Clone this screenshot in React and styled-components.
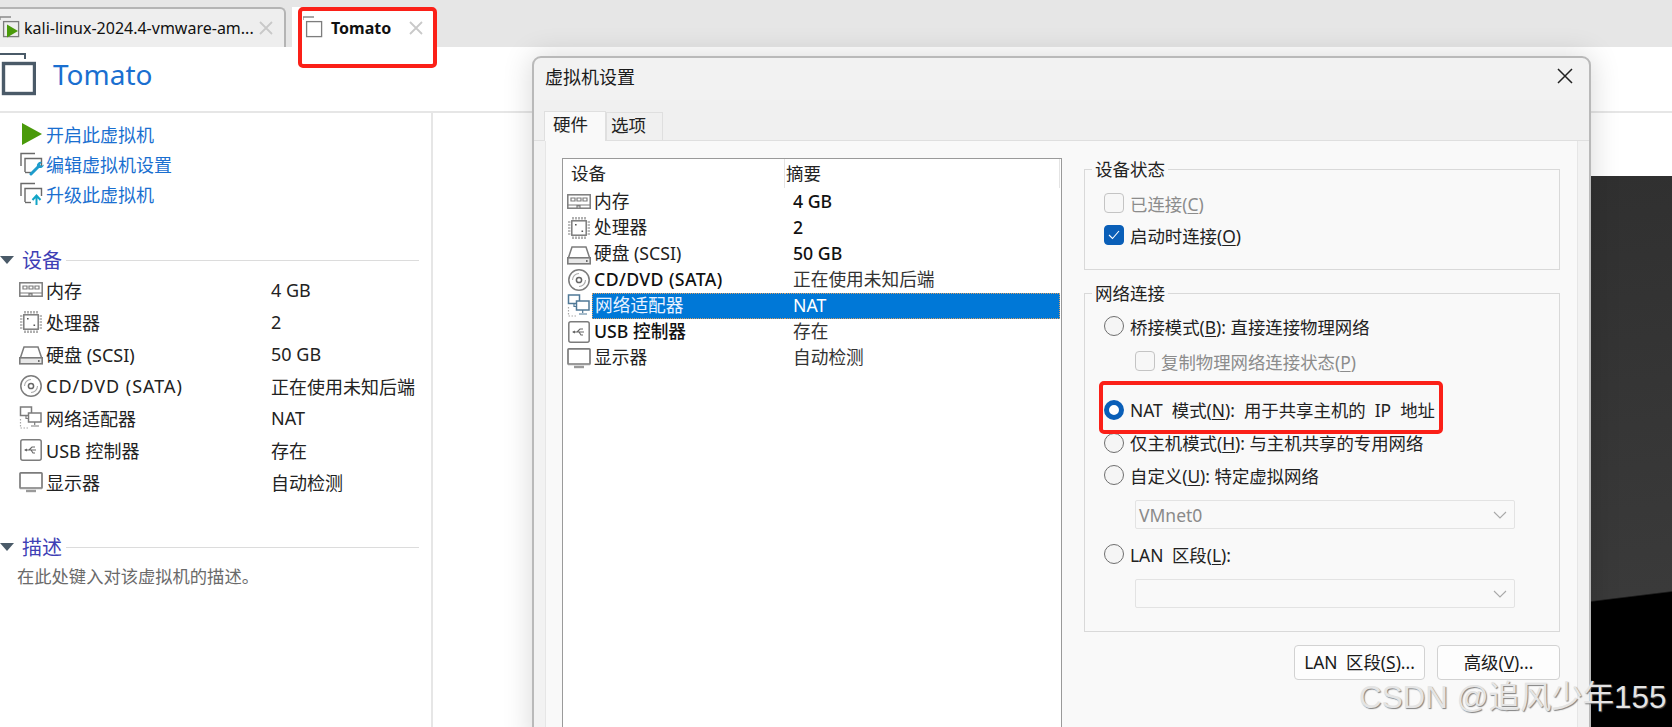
import React from 'react';
import styled, { createGlobalStyle } from 'styled-components';

const Global = createGlobalStyle`
  html, body { margin: 0; padding: 0; background: #fff; }
  body { font-family: "Noto Sans", "Noto Sans CJK SC", sans-serif; color: #1a1a1a; }
  #root { width: 1672px; height: 727px; overflow: hidden; }
  * { box-sizing: border-box; }
`;

const Page = styled.div`
  position: relative; width: 1672px; height: 727px; overflow: hidden;
  display: flex; flex-direction: column; background: #fff;
`;
const TabBar = styled.div`
  height: 47px; background: #e6e6e6; display: flex; align-items: flex-end; gap: 6px; flex: none;
`;
const Tab = styled.div`
  height: 40px; display: flex; align-items: flex-start; padding-top: 9px; flex: none;
  width: ${p => p.$w}px;
  background: ${p => (p.$active ? '#fff' : '#eeeeee')};
  border-radius: 0 6px 0 0;
  ${p => (p.$active ? 'padding-left: 11px;' : 'border-top: 2px solid #b4b4b4; border-right: 2px solid #b4b4b4; padding-top: 7px;')}
`;
const TabLabel = styled.span`
  font-size: 16px;
  font-weight: ${p => (p.$active ? 700 : 400)};
  line-height: 24px; color: #111; white-space: nowrap; margin-left: ${p => (p.$active ? '8px' : '4px')};
`;
const TabClose = styled.svg`
  width: 14px; height: 14px; margin-top: 5px; margin-left: auto; margin-right: ${p => p.$mr}px; flex: none;
`;
const Header = styled.div`
  height: 66px; flex: none; border-bottom: 2px solid #e6e6e6; display: flex; align-items: center; gap: 17px;
  padding-bottom: 10px;
`;
const Title = styled.h1`
  margin: 0; font-size: 28px; font-weight: 400; color: #1a6fd0; line-height: 36px;
`;
const Body = styled.div`
  flex: 1; display: flex; min-height: 0;
`;
const Sidebar = styled.aside`
  width: 433px; flex: none; border-right: 2px solid #e6e6e6; padding-top: 6px;
`;
const Action = styled.div`
  height: 30px; display: flex; align-items: center; padding-left: 20px; gap: 2px;
  font-size: 18px; color: #1a6fd0;
`;
const Section = styled.div`
  height: 30px; margin-top: ${p => p.$mt}px; display: flex; align-items: center; padding-right: 12px;
`;
const SectionArrow = styled.i`
  width: 0; height: 0; border-left: 7px solid transparent; border-right: 7px solid transparent;
  border-top: 8px solid #4a5a68; flex: none; margin-top: 2px;
`;
const SectionTitle = styled.span`
  font-size: 20px; color: #3f3fb5; margin-left: 8px; line-height: 30px; padding-top: 4px;
`;
const SectionLine = styled.i`
  flex: 1; height: 1px; background: #dcdcdc; margin: 2px 0 0 4px;
`;
const InfoRow = styled.div`
  height: 32px; display: grid; grid-template-columns: 252px 1fr; align-items: center; padding-left: 19px;
  font-size: 18px; color: #222;
`;
const InfoName = styled.div`
  display: flex; align-items: center; gap: 3px; white-space: nowrap;
`;
const Spread = styled.span`
  letter-spacing: ${p => (p.$on ? p.$ls : 0)}px;
`;
const Desc = styled.div`
  height: 32px; line-height: 32px; padding-left: 17px; font-size: 17.3px; color: #6a6a6a; white-space: nowrap;
`;
const Main = styled.main`
  flex: 1; display: flex; justify-content: flex-end; padding-top: 63px;
`;
const Preview = styled.div`
  width: 82px;
  background: linear-gradient(173deg, #303030 0%, #3a3a3a 75.7%, #000 76%);
`;
const Dialog = styled.section`
  position: absolute; left: 532px; top: 56px; width: 1059px; height: 690px;
  background: #f2f2f2; border: 2px solid #b9b9b9; border-radius: 9px 9px 0 0;
  box-shadow: 0 0 30px rgba(0,0,0,.16); display: flex; flex-direction: column;
`;
const DialogTitle = styled.div`
  height: 42px; flex: none; display: flex; align-items: center; justify-content: space-between;
  padding: 0 16px 6px 11px; font-size: 18px; color: #1a1a1a;
`;
const DialogTabs = styled.div`
  height: 41px; flex: none; background: #f0f0f0; display: flex; align-items: flex-end; padding-left: 10px;
  border-bottom: 1px solid #dfdfdf;
`;
const DialogTab = styled.div`
  width: ${p => p.$w}px; height: ${p => (p.$active ? 30 : 28)}px;
  background: ${p => (p.$active ? '#f9f9f9' : '#f0f0f0')};
  border: 1px solid #dfdfdf; border-bottom: none;
  margin-bottom: ${p => (p.$active ? '-1px' : '0')};
  font-size: 17.5px; line-height: 25px; padding-left: ${p => p.$pl}px; color: #222;
`;
const Pane = styled.div`
  flex: 1; margin: 0 11px; background: #f9f9f9; border-right: 1px solid #e6e6e6; border-left: 1px solid #e6e6e6;
  display: flex; padding: 17px 16px 0 16px; gap: 22px; min-height: 0;
`;
const List = styled.div`
  width: 500px; flex: none; background: #fff; border: 1px solid #9a9a9a; border-bottom: none;
`;
const ListHead = styled.div`
  height: 30px; display: grid; grid-template-columns: 222px 1fr; font-size: 17.5px; color: #222;
  padding-right: 1px;
`;
const HeadCell = styled.div`
  padding-left: ${p => p.$pl}px; line-height: 29px;
  border-right: 1px solid #e4e4e4; height: 29px;
`;
const ListRow = styled.div`
  height: 26px; display: grid; grid-template-columns: 25px 193px 1fr; align-items: center;
  font-size: 17.7px; padding-left: 4px; padding-right: 1px;
`;
const RowLabel = styled.div`
  height: 26px; line-height: 25px; padding-left: 2px; white-space: nowrap;
  ${p => (p.$sel ? 'background: #0078d7; color: #e8f2ff; border: 1px dotted #d9a066; border-right: none; line-height: 23px;' : 'color: #222;')}
  ${p => (p.$strong ? 'font-weight: 500; color: #111;' : '')}
`;
const RowValue = styled.div`
  height: 26px; line-height: 25px; padding-left: 8px; white-space: nowrap;
  ${p => (p.$sel ? 'background: #0078d7; color: #fff; border: 1px dotted #d9a066; border-left: none; line-height: 23px;' : 'color: #333;')}
  ${p => (p.$strong ? 'font-weight: 500; color: #111;' : '')}
`;
const Right = styled.div`
  width: 476px; flex: none; display: flex; flex-direction: column;
`;
const Group = styled.fieldset`
  margin: ${p => p.$mt}px 0 0; padding: ${p => p.$pt}px 0 0 19px; height: ${p => p.$h}px; width: 476px;
  border: 1px solid #d9d9d9; position: relative; display: flex; flex-direction: column;
`;
const Legend = styled.div`
  position: absolute; left: 7px; top: -14px; padding: 0 3px; background: #f9f9f9;
  font-size: 17.5px; line-height: 26px; color: #222;
`;
const OptRow = styled.label`
  height: ${p => p.$h}px; margin-top: ${p => p.$mt || 0}px; display: flex; align-items: center; gap: 6px; flex: none;
  font-size: 17.4px; color: ${p => (p.$off ? '#8c8c8c' : '#222')};
  padding-left: ${p => p.$in || 0}px; white-space: nowrap; word-spacing: ${p => p.$ws || 0}px;
  & u { text-underline-offset: 2px; }
`;
const Box = styled.span`
  width: 20px; height: 20px; border-radius: 4px; flex: none; display: flex; align-items: center; justify-content: center;
  background: ${p => (p.$on ? '#0a5fb8' : '#f7f7f7')};
  border: 1px solid ${p => (p.$on ? '#0a5fb8' : '#c4c4c4')};
`;
const Radio = styled.span`
  width: 20px; height: 20px; border-radius: 50%; flex: none;
  ${p => (p.$on ? 'background: #fff; border: 5.5px solid #0a5fb8;' : 'background: #f5f5f5; border: 1px solid #6f6f6f;')}
`;
const Select = styled.div`
  width: 380px; height: 29px; margin: ${p => p.$mt}px 0 0 31px; flex: none; background: #f9f9f9;
  border: 1px solid #e3e3e3; border-radius: 2px; display: flex; align-items: center; justify-content: space-between;
  padding: 0 3px 0 3px; font-size: 17.5px; color: #8a8a8a;
`;
const Buttons = styled.div`
  display: flex; justify-content: flex-end; gap: 12px; margin-top: 13px;
`;
const Button = styled.div`
  width: ${p => p.$w}px; height: 35px; background: #fdfdfd; border: 1px solid #d2d2d2; border-radius: 4px;
  font-size: 17.4px; line-height: 33px; text-align: center; color: #1a1a1a; white-space: nowrap;
  word-spacing: ${p => p.$ws || 0}px;
  & u { text-underline-offset: 2px; }
`;
const Mark = styled.div`
  position: absolute; border: 4px solid #fb2018; border-radius: 5px; pointer-events: none;
  left: ${p => p.$x}px; top: ${p => p.$y}px; width: ${p => p.$w}px; height: ${p => p.$h}px;
`;
const Watermark = styled.div`
  position: absolute; left: 1359px; top: 678px; font-family: "Liberation Sans", "Noto Sans CJK SC", sans-serif;
  font-size: 31.4px; line-height: 40px; color: #e4e4e4; white-space: nowrap;
  text-shadow: 1px 1px 1px rgba(90,90,90,.75);
`;

const S = ({ children, w = 24, h = 24, vb = '0 0 24 24', style }) => (
  <svg width={w} height={h} viewBox={vb} fill="none" stroke="#7c7c7c" strokeWidth="1.5" style={{ flex: 'none', ...style }}>{children}</svg>
);
const MemIcon = () => (
  <S><rect x="0.8" y="4.8" width="22.4" height="13.4" /><path d="M4 8h4v3H4zM10 8h4v3h-4zM16 8h4v3h-4z" strokeWidth="1.2" /><path d="M1 15h22M10 18v-2h3v2" strokeWidth="1.2" /></S>
);
const CpuIcon = () => (
  <S><rect x="4.8" y="4.8" width="14.4" height="14.4" /><path d="M6 1v2.4M9 1v2.4M12 1v2.4M15 1v2.4M18 1v2.4M6 20.6V23M9 20.6V23M12 20.6V23M15 20.6V23M18 20.6V23M1 6h2.4M1 9h2.4M1 12h2.4M1 15h2.4M1 18h2.4M20.6 6H23M20.6 9H23M20.6 12H23M20.6 15H23M20.6 18H23" strokeWidth="1.2" /><path d="M8 8h1.6v1.6H8zM14.5 14.5h1.6v1.6h-1.6z" fill="#555" stroke="none" /></S>
);
const DiskIcon = () => (
  <S><path d="M1 17 5 5h14l4 12" /><rect x="0.8" y="15.8" width="22.4" height="6" fill="#e8e8e8" strokeWidth="1.6" /><path d="M19 19h1.6" stroke="#444" /></S>
);
const CdIcon = () => (
  <S><circle cx="12" cy="12" r="10.2" /><circle cx="12" cy="12" r="2.6" stroke="#666" /><path d="M5.5 12A6.5 6.5 0 0 1 12 5.5M18.5 12A6.5 6.5 0 0 1 12 18.5" strokeWidth="1.1" stroke="#aaa" /></S>
);
const NetIcon = ({ tone = '#7c7c7c' }) => (
  <S><rect x="1.5" y="1" width="11" height="8.5" stroke={tone} /><rect x="9.5" y="7" width="12.5" height="9" fill="#fff" stroke={tone} /><path d="M7 9.5v3H9.5M15.7 16v3M12 20h8" stroke={tone} strokeWidth="1.2" /><path d="M1.5 13v9h9" stroke="#a8a8a8" strokeWidth="1.2" strokeDasharray="1.5 1.5" /></S>
);
const UsbIcon = () => (
  <S><rect x="1.8" y="1.8" width="20.4" height="20.4" rx="2" /><path d="M6 12h11M10 12l3-3h3M12 12l2 3h2" strokeWidth="1.1" stroke="#666" /><path d="M8 10.5 5 12l3 1.5z" fill="#666" stroke="none" /></S>
);
const MonitorIcon = () => (
  <S><rect x="1" y="2.8" width="22" height="15.4" rx="0.8" strokeWidth="1.7" /><path d="M1 18.5h22" strokeWidth="1.5" stroke="#999" /><path d="M7 21h10" strokeWidth="2.4" stroke="#9a9a9a" /></S>
);
const PlayIcon = () => (
  <svg width="20" height="22" viewBox="0 0 20 22" style={{ flex: 'none', marginLeft: 2, marginRight: 2 }}><path d="M0 0 20 11 0 22z" fill="#4a9a0a" /></svg>
);
const BaseDoc = ({ children }) => (
  <svg width="24" height="24" viewBox="0 0 24 24" fill="none" style={{ flex: 'none' }}>
    <path d="M1 14V1.5h14" stroke="#6a6a6a" strokeWidth="1.4" /><path d="M5 20V6.5h16.5V14" stroke="#6a6a6a" strokeWidth="1.4" /><path d="M5 20.5h6" stroke="#6a6a6a" strokeWidth="1.4" />
    {children}
  </svg>
);
const EditIcon = () => (
  <BaseDoc><path d="M11 22l7-7" stroke="#1e9ccc" strokeWidth="3" strokeLinecap="round" /><path d="M17 15a4 4 0 0 1 5-5l-2 2.5 1.5 1.5 2.5-1.5a4 4 0 0 1-6 3z" fill="#1e9ccc" /></BaseDoc>
);
const UpIcon = () => (
  <BaseDoc><path d="M16.5 23V14.5M12.5 18l4-4.5 4 4.5" stroke="#12a5c7" strokeWidth="2" /></BaseDoc>
);
const VmTabIcon = ({ play }) => (
  <svg width="20" height="22" viewBox="0 0 20 22" fill="none" style={{ flex: 'none' }}>
    <path d="M0 4V1h11" stroke="#8a8a8a" strokeWidth="1.3" />
    <rect x="3.6" y="5.6" width="15" height="15" fill={play ? '#eee' : '#fff'} stroke="#7d7d7d" strokeWidth="1.3" />
    {play && <path d="M7 8.5 18 15 7 21.5z" fill="#4a9a0a" />}
  </svg>
);
const BigVm = () => (
  <svg width="36" height="44" viewBox="0 0 36 44" fill="none" style={{ flex: 'none' }}>
    <path d="M0 2h25v5" stroke="#4a5a68" strokeWidth="2" />
    <rect x="3.5" y="11.5" width="31" height="30" stroke="#4a5a68" strokeWidth="3.4" />
  </svg>
);
const CloseX = ({ mr }) => (
  <TabClose $mr={mr} viewBox="0 0 14 14"><path d="M1 1l12 12M13 1 1 13" stroke="#c9c9c9" strokeWidth="1.8" /></TabClose>
);
const Chevron = () => (
  <svg width="14" height="8" viewBox="0 0 14 8" fill="none" style={{ marginRight: 4 }}><path d="M1 1l6 6 6-6" stroke="#a9a9a9" strokeWidth="1.1" /></svg>
);

const sideRows = [
  [MemIcon, '内存', '4 GB'], [CpuIcon, '处理器', '2'], [DiskIcon, '硬盘 (SCSI)', '50 GB'],
  [CdIcon, 'CD/DVD (SATA)', '正在使用未知后端'], [NetIcon, '网络适配器', 'NAT'], [UsbIcon, 'USB 控制器', '存在'], [MonitorIcon, '显示器', '自动检测'],
];

export default function App() {
  return (
    <Page>
      <Global />
      <TabBar>
        <Tab $w={286}>
          <VmTabIcon play />
          <TabLabel>kali-linux-2024.4-vmware-am...</TabLabel>
          <CloseX mr={11} />
        </Tab>
        <Tab $w={145} $active>
          <VmTabIcon />
          <TabLabel $active>Tomato</TabLabel>
          <CloseX mr={14} />
        </Tab>
      </TabBar>
      <Header>
        <BigVm />
        <Title>Tomato</Title>
      </Header>
      <Body>
        <Sidebar>
          <Action><PlayIcon />开启此虚拟机</Action>
          <Action><EditIcon />编辑虚拟机设置</Action>
          <Action><UpIcon />升级此虚拟机</Action>
          <Section $mt={35}><SectionArrow /><SectionTitle>设备</SectionTitle><SectionLine /></Section>
          {sideRows.map(([I, n, v], i) => (
            <InfoRow key={n}><InfoName><I /><Spread $on={i === 3} $ls={1}>{n}</Spread></InfoName><div>{v}</div></InfoRow>
          ))}
          <Section $mt={33}><SectionArrow /><SectionTitle>描述</SectionTitle><SectionLine /></Section>
          <Desc>在此处键入对该虚拟机的描述。</Desc>
        </Sidebar>
        <Main><Preview /></Main>
      </Body>

      <Dialog>
        <DialogTitle>
          <span>虚拟机设置</span>
          <svg width="16" height="16" viewBox="0 0 16 16"><path d="M1 1l14 14M15 1 1 15" stroke="#222" strokeWidth="1.5" /></svg>
        </DialogTitle>
        <DialogTabs>
          <DialogTab $w={62} $active $pl={8}>硬件</DialogTab>
          <DialogTab $w={57} $pl={4}>选项</DialogTab>
        </DialogTabs>
        <Pane>
          <List>
            <ListHead>
              <HeadCell $pl={8}>设备</HeadCell>
              <HeadCell $pl={1}>摘要</HeadCell>
            </ListHead>
            {sideRows.map(([I, n, v], i) => (
              <ListRow key={n}>
                <I tone="#4f7896" />
                <RowLabel $sel={i === 4} $strong={i === 3 || i === 5}><Spread $on={i === 3} $ls={0.4}>{n}</Spread></RowLabel>
                <RowValue $sel={i === 4} $strong={i < 3}>{v}</RowValue>
              </ListRow>
            ))}
          </List>
          <Right>
            <Group $mt={11} $h={101} $pt={17}>
              <Legend>设备状态</Legend>
              <OptRow $h={32} $off><Box /><span>已连接(<u>C</u>)</span></OptRow>
              <OptRow $h={32}>
                <Box $on><svg width="12" height="10" viewBox="0 0 12 10" fill="none"><path d="M1 5l3.5 3.5L11 1" stroke="#fff" strokeWidth="1.1" /></svg></Box>
                <span>启动时连接(<u>O</u>)</span>
              </OptRow>
            </Group>
            <Group $mt={23} $h={339} $pt={15}>
              <Legend>网络连接</Legend>
              <OptRow $h={34}><Radio /><span>桥接模式(<u>B</u>): 直接连接物理网络</span></OptRow>
              <OptRow $h={36} $off $in={31}><Box /><span>复制物理网络连接状态(<u>P</u>)</span></OptRow>
              <OptRow $h={33} $mt={14} $ws={4.5}><Radio $on /><span>NAT 模式(<u>N</u>): 用于共享主机的 IP 地址</span></OptRow>
              <OptRow $h={33}><Radio /><span>仅主机模式(<u>H</u>): 与主机共享的专用网络</span></OptRow>
              <OptRow $h={32}><Radio /><span>自定义(<u>U</u>): 特定虚拟网络</span></OptRow>
              <Select $mt={9}>VMnet0<Chevron /></Select>
              <OptRow $h={34} $mt={8} $ws={4}><Radio /><span>LAN 区段(<u>L</u>):</span></OptRow>
              <Select $mt={8}><span /><Chevron /></Select>
            </Group>
            <Buttons>
              <Button $w={131} $ws={4}>LAN 区段(<u>S</u>)...</Button>
              <Button $w={123}>高级(<u>V</u>)...</Button>
            </Buttons>
          </Right>
        </Pane>
      </Dialog>

      <Mark $x={298} $y={7} $w={139} $h={61} />
      <Mark $x={1099} $y={381} $w={344} $h={53} />
      <Watermark>CSDN @追风少年155</Watermark>
    </Page>
  );
}
